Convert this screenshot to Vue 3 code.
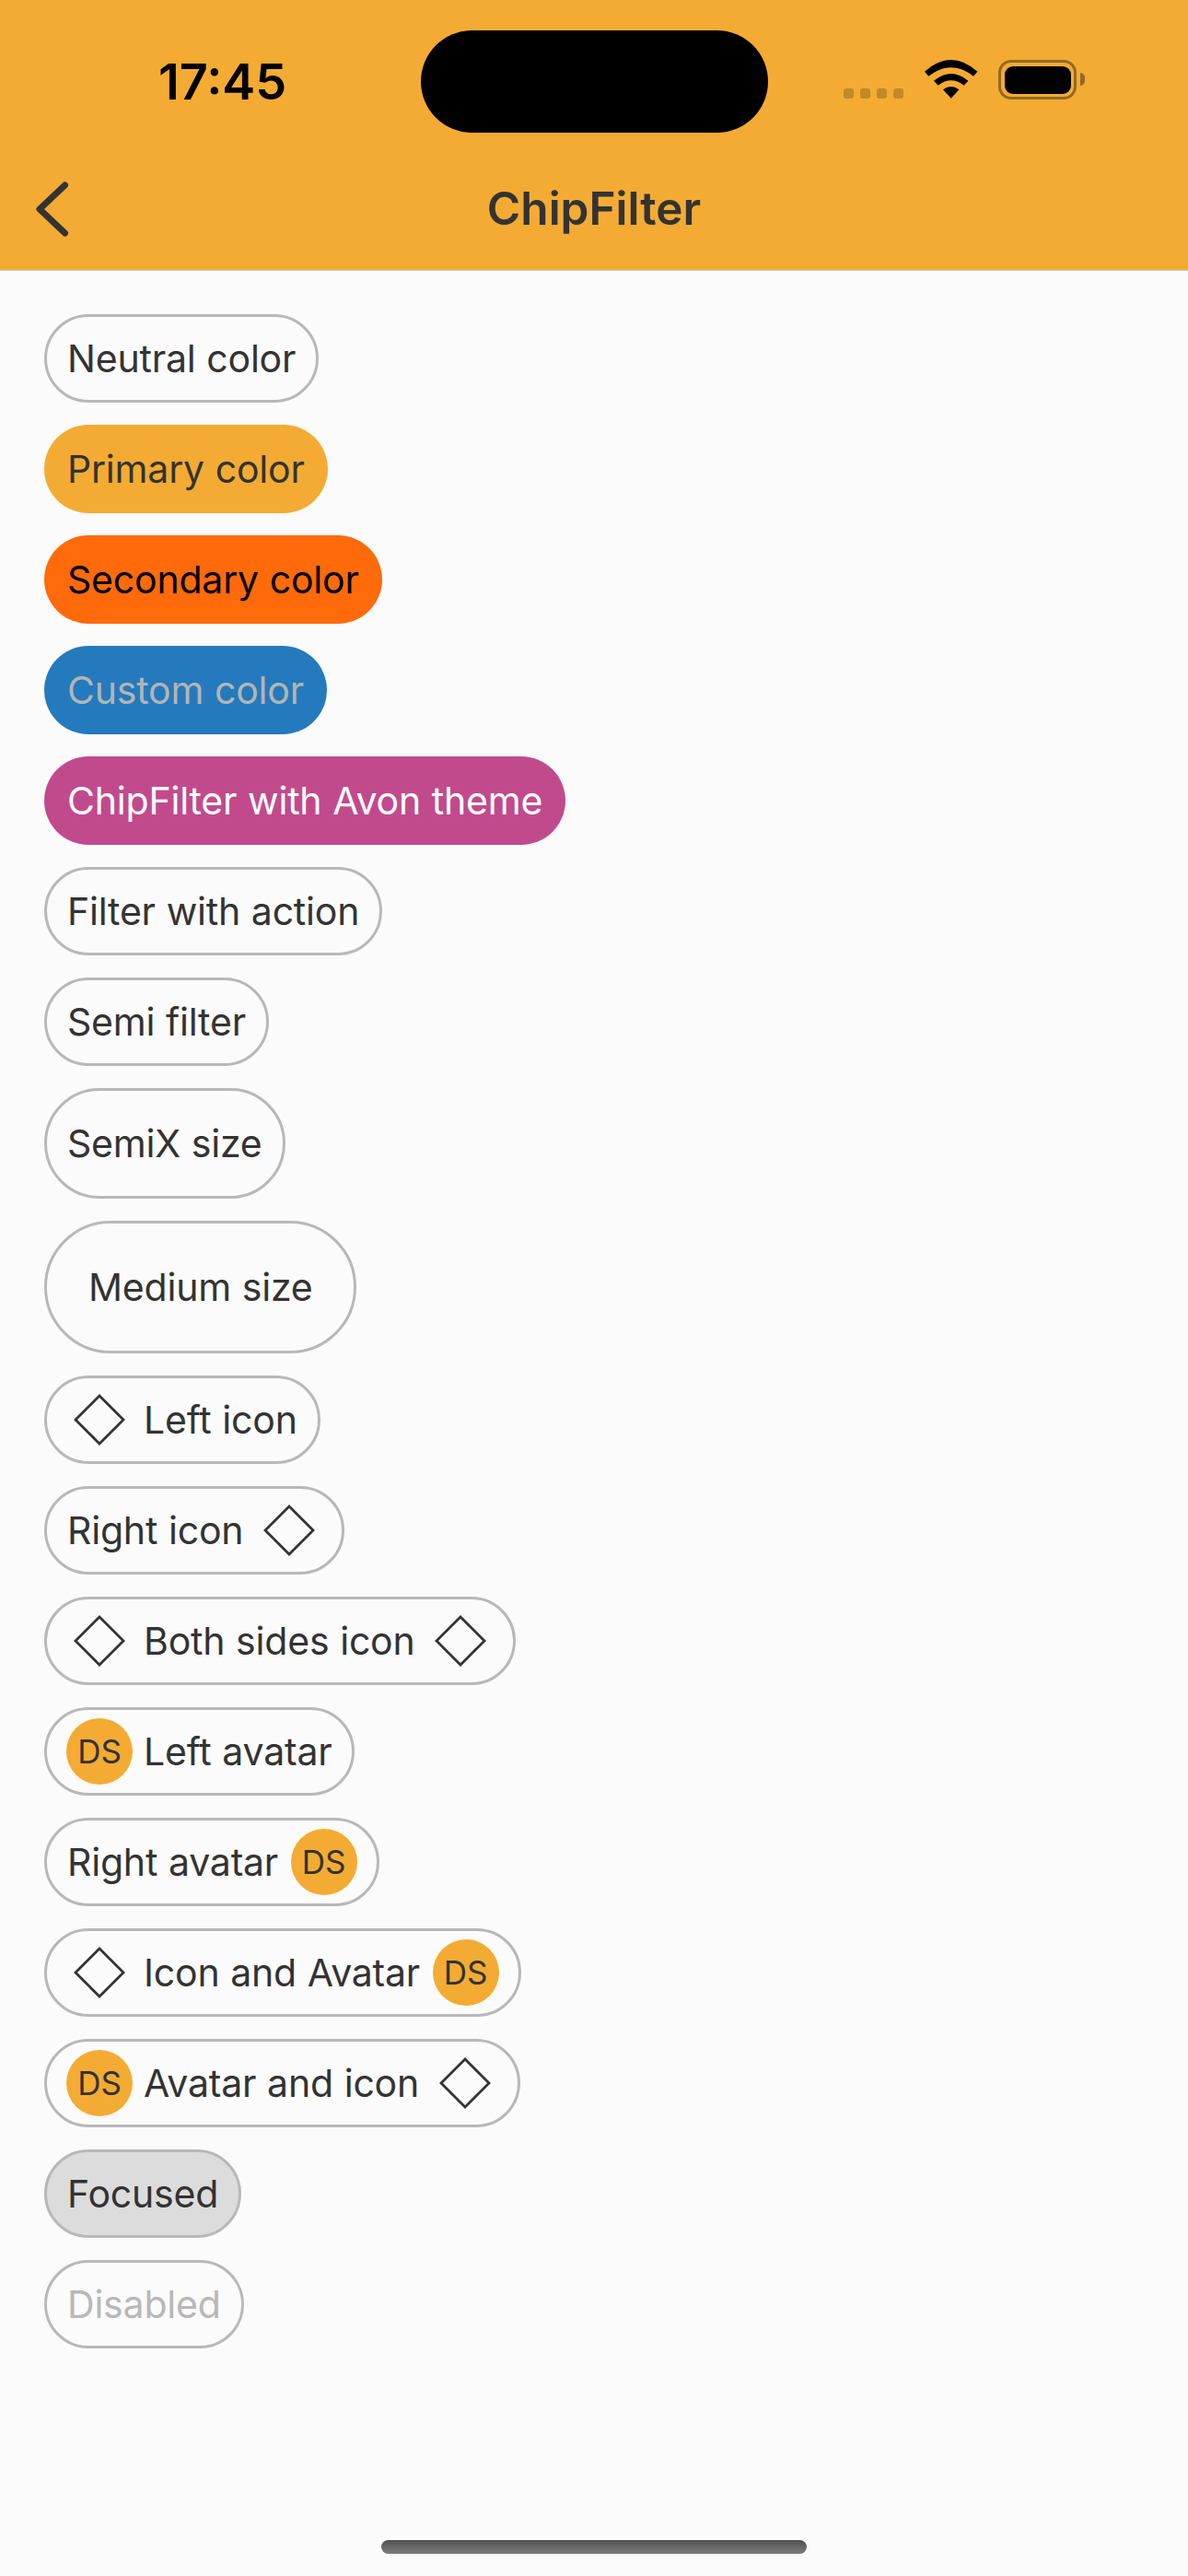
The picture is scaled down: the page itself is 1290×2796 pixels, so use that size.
<script setup>
const chips = [
  { label: 'Neutral color', kind: 'neutral' },
  { label: 'Primary color', kind: 'primary' },
  { label: 'Secondary color', kind: 'secondary' },
  { label: 'Custom color', kind: 'custom' },
  { label: 'ChipFilter with Avon theme', kind: 'avon' },
  { label: 'Filter with action', kind: 'neutral' },
  { label: 'Semi filter', kind: 'neutral' },
  { label: 'SemiX size', kind: 'neutral', size: 'semix' },
  { label: 'Medium size', kind: 'neutral', size: 'medium' },
  { label: 'Left icon', kind: 'neutral', left: 'icon' },
  { label: 'Right icon', kind: 'neutral', right: 'icon' },
  { label: 'Both sides icon', kind: 'neutral', left: 'icon', right: 'icon' },
  { label: 'Left avatar', kind: 'neutral', left: 'avatar' },
  { label: 'Right avatar', kind: 'neutral', right: 'avatar' },
  { label: 'Icon and Avatar', kind: 'neutral', left: 'icon', right: 'avatar' },
  { label: 'Avatar and icon', kind: 'neutral', left: 'avatar', right: 'icon' },
  { label: 'Focused', kind: 'focused' },
  { label: 'Disabled', kind: 'disabled' },
]
</script>

<template>
  <div class="screen">
    <header class="header">
      <div class="status">
        <span class="time">17:45</span>
        <div class="island"></div>
        <div class="status-right">
          <div class="dots"><i></i><i></i><i></i><i></i></div>
          <svg class="wifi" width="58" height="42" viewBox="0 0 58 42">
            <path d="M0 12.7 Q28.7 -12.7 57.4 12.7 L53 17.7 Q28.7 -1.1 4.3 17.7 Z M10 22.7 Q28.7 7.3 47.4 22.7 L42.7 27.7 Q28.7 16.9 14.7 27.7 Z M20 32.3 Q28.7 25.7 37.4 32.3 L28.7 41.7 Z" fill="#000"/>
          </svg>
          <div class="battery"><div class="cell"></div></div>
          <div class="nub"></div>
        </div>
      </div>
      <div class="nav">
        <svg class="back" width="42" height="60" viewBox="0 0 42 60">
          <path d="M34.5 4 L7 30 L34.5 56" fill="none" stroke="#333" stroke-width="7" stroke-linecap="round" stroke-linejoin="round"/>
        </svg>
        <h1 class="title">ChipFilter</h1>
      </div>
    </header>
    <main class="list">
      <div v-for="c in chips" :key="c.label" class="chip" :class="[c.kind, c.size, c.left && 'has-left', c.right && 'has-right']">
        <svg v-if="c.left === 'icon'" class="diamond" width="72" height="72" viewBox="0 0 72 72"><path d="M36 10 L62 36 L36 62 L10 36 Z" fill="none" stroke="#333" stroke-width="2.8"/></svg>
        <span v-else-if="c.left === 'avatar'" class="avatar">DS</span>
        <span class="label">{{ c.label }}</span>
        <svg v-if="c.right === 'icon'" class="diamond" width="72" height="72" viewBox="0 0 72 72"><path d="M36 10 L62 36 L36 62 L10 36 Z" fill="none" stroke="#333" stroke-width="2.8"/></svg>
        <span v-else-if="c.right === 'avatar'" class="avatar">DS</span>
      </div>
    </main>
    <div class="home"></div>
  </div>
</template>

<style scoped>
.screen { width: 1290px; height: 2796px; background: #fbfbfb; position: relative; overflow: hidden; font-family: Inter, "Liberation Sans", sans-serif; }
.header { height: 293px; background: #f4ab33; border-bottom: 1px solid #c9c9c9; box-sizing: content-box; }
.status { height: 166px; position: relative; }
.time { position: absolute; left: 172px; top: 59px; font: 600 54px/1.1 Inter, sans-serif; color: #000; }
.island { position: absolute; left: 457px; top: 33px; width: 377px; height: 111px; border-radius: 56px; background: #000; }
.status-right { position: absolute; left: 916px; top: 65px; width: 264px; height: 43px; }
.dots { position: absolute; left: 0; top: 31px; display: flex; gap: 7px; }
.dots i { width: 11px; height: 11px; border-radius: 3px; background: rgba(0,0,0,.2); }
.wifi { position: absolute; left: 88px; top: 0; }
.battery { position: absolute; left: 168px; top: 0; width: 85px; height: 43px; box-sizing: border-box; border: 3.5px solid #94692a; border-radius: 14px; padding: 3.5px; }
.cell { width: 100%; height: 100%; background: #000; border-radius: 9px; }
.nub { position: absolute; left: 257px; top: 14px; width: 5px; height: 14px; background: #94692a; border-radius: 0 7px 7px 0; }
.nav { height: 127px; position: relative; display: flex; align-items: center; justify-content: center; }
.back { position: absolute; left: 36px; top: 31px; }
.title { margin: -6px 0 0; font: 600 49.5px/1.2 Inter, sans-serif; color: #333; }
.list { display: flex; flex-direction: column; align-items: flex-start; gap: 24px; padding: 47px 48px 0; }
.chip { height: 96px; box-sizing: border-box; display: inline-flex; align-items: center; padding: 0 22px; border-radius: 48px; border: 3px solid transparent; font-size: 41px; letter-spacing: -0.2px; word-spacing: 0.5px; color: #333; }
.label { line-height: 1.2; padding-top: 2px; white-space: nowrap; }
.neutral { border-color: #b8b8b8; }
.primary { background: #f4ab33; }
.secondary { background: #ff6a0b; color: #000; }
.custom { background: #247abd; color: #b4b4b4; }
.avon { background: #c14a8d; color: #fff; }
.focused { background: #dcdcdc; border-color: #b8b8b8; }
.disabled { border-color: #b8b8b8; color: #b8b8b8; }
.semix { height: 120px; border-radius: 60px; }
.medium { height: 144px; border-radius: 72px; padding: 0 45px; }
.chip.has-left { padding-left: 21px; }
.chip.has-right { padding-right: 21px; }
.diamond { flex: none; }
.has-left > :first-child { margin-right: 12px; }
.has-right > :last-child { margin-left: 13.5px; }
.avatar { width: 72px; height: 72px; flex: none; border-radius: 50%; background: #f4ab33; color: #333; font-size: 35px; letter-spacing: 0; word-spacing: 0; display: flex; align-items: center; justify-content: center; }
.home { position: absolute; left: 414px; top: 2757px; width: 462px; height: 15px; border-radius: 8px; background: linear-gradient(#4f4f4f, #7e7e7e); }
</style>
